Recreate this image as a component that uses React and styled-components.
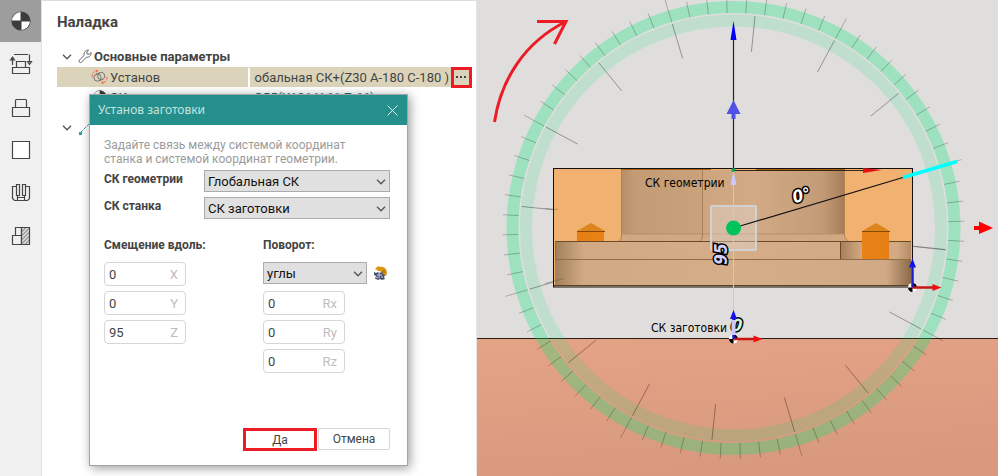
import React, { useState } from "react";
import styled, { createGlobalStyle, css } from "styled-components";

const color = {
  text: "#444444",
  muted: "#9b9b9b",
  border: "#d6d6d6",
  row: "#dbd4bb",
  teal: "#248f8b",
  red: "#ed1c24",
  side: "#f0f0f0"
};

const GlobalStyle = createGlobalStyle`
  * {
    box-sizing: border-box;
  }
  body {
    margin: 0;
    background: #ffffff;
    color: ${color.text};
    font-family: Roboto, "Liberation Sans", sans-serif;
    font-size: 13px;
  }
  button, input, select {
    font: inherit;
    color: inherit;
    margin: 0;
  }
`;

const Layout = styled.main`
  display: grid;
  grid-template-columns: 42px 435px minmax(0, 1fr);
  min-height: 100vh;
`;
const Sidebar = styled.nav`
  background: ${color.side};
  border-right: 1px solid #e2e2e2;
`;
const SideButton = styled.button`
  display: flex;
  align-items: center;
  justify-content: center;
  width: 100%;
  height: 42px;
  margin-bottom: 1px;
  padding: 0;
  border: 0;
  background: ${({ $active }) => ($active ? "#9d9d9d" : "transparent")};
`;
const Panel = styled.section`
  position: relative;
  border-top: 1px solid #dcdcdc;
  border-right: 1px solid #e6e6e6;
  padding: 11px 4px 0 15px;
`;
const Title = styled.h1`
  margin: 0 0 14px;
  font-size: 15px;
  line-height: 20px;
  font-weight: 700;
`;
const Tree = styled.div`
  display: flex;
  flex-direction: column;
`;
const Row = styled.div`
  display: flex;
  align-items: center;
  height: 20px;
  background: ${({ $selected }) => ($selected ? color.row : "transparent")};
`;
const Group = styled.div`
  display: flex;
  align-items: center;
  gap: 2px;
  height: 21px;
  padding-left: 5px;
  font-weight: 700;

  svg:first-child {
    margin-right: 4px;
  }
  & + ${Row} ~ & {
    margin-top: 10px;
  }
`;
const Name = styled.div`
  display: flex;
  align-items: center;
  gap: 2px;
  width: 191px;
  padding-left: 34px;
`;
const NameIcon = styled.span`
  display: flex;
  justify-content: center;
  width: 17px;
`;
const Value = styled.div`
  display: flex;
  flex: 1;
  align-items: center;
  min-width: 0;
  height: 19px;
  padding: 0 2px 0 4px;
  border-left: 2px solid #ffffff;
  color: ${({ $link }) => ($link ? "#1d6a73" : color.text)};
`;
const Clip = styled.div`
  display: flex;
  flex: 1;
  justify-content: ${({ $end }) => ($end ? "flex-end" : "flex-start")};
  min-width: 0;
  overflow: hidden;
  white-space: nowrap;
`;
const More = styled.button`
  display: flex;
  align-items: center;
  justify-content: center;
  width: 21px;
  height: 21px;
  padding: 0;
  border: 3px solid ${color.red};
  background: ${color.row};
`;

const Dialog = styled.form`
  position: absolute;
  left: 47px;
  top: 93px;
  width: 319px;
  border: 1px solid #a3a5a5;
  background: #ffffff;
  box-shadow: 2px 2px 10px rgba(0, 0, 0, 0.4);
`;
const DialogHead = styled.header`
  display: flex;
  align-items: center;
  justify-content: space-between;
  height: 30px;
  padding: 0 7px 0 8px;
  background: ${color.teal};
  color: #c6e3e1;
  font: 12px/30px "Noto Sans", sans-serif;
`;
const Close = styled.button`
  display: flex;
  padding: 2px;
  border: 0;
  background: none;
`;
const DialogBody = styled.div`
  padding: 13px 17px 14px 14px;
`;
const Hint = styled.p`
  margin: 0 0 4px;
  color: ${color.muted};
  font-size: 12px;
  line-height: 14px;
  white-space: nowrap;
`;
const Field = styled.div`
  display: grid;
  grid-template-columns: 100px 1fr;
  margin-bottom: 5px;
`;
const Label = styled.label`
  font-size: 12px;
  font-weight: 700;
  line-height: 18px;
`;
const SelectBox = styled.div`
  position: relative;
  width: ${({ $width }) => $width || "100%"};

  svg {
    position: absolute;
    right: 4px;
    top: 9px;
    pointer-events: none;
  }
`;
const Select = styled.select`
  appearance: none;
  display: block;
  width: 100%;
  height: 22px;
  padding: 0 3px;
  border: 1px solid #acacac;
  border-radius: 0;
  background: #e0e0e0;
  color: #111111;
`;
const Columns = styled.div`
  display: grid;
  grid-template-columns: 159px 1fr;
  margin-top: 17px;
`;
const Column = styled.fieldset`
  display: flex;
  flex-direction: column;
  gap: 5px;
  min-width: 0;
  margin: 0;
  padding: 0;
  border: 0;
`;
const Legend = styled.legend`
  padding: 0;
  margin-bottom: 8px;
  font-size: 12px;
  font-weight: 700;
  line-height: 18px;
`;
const AngleRow = styled.div`
  display: flex;
  align-items: center;
  gap: 6px;
  height: 24px;
  padding-bottom: 2px;
`;
const NumberBox = styled.label`
  display: flex;
  align-items: center;
  width: 82px;
  height: 24px;
  padding: 0 7px 0 4px;
  border: 1px solid ${color.border};
  border-radius: 4px;
  color: #bdbdbd;
`;
const NumberInput = styled.input`
  flex: 1;
  min-width: 0;
  padding: 0;
  border: 0;
  outline: 0;
  background: none;
  color: ${color.text};
`;
const IconButton = styled.button`
  display: flex;
  padding: 0;
  border: 0;
  background: none;
`;
const Footer = styled.footer`
  display: flex;
  justify-content: flex-end;
  gap: 1px;
  margin-top: 55px;
`;
const Button = styled.button`
  width: ${({ $primary }) => ($primary ? "74px" : "72px")};
  height: ${({ $primary }) => ($primary ? "23px" : "22px")};
  padding: 0;
  background: #ffffff;
  font-size: 12px;
  ${({ $primary }) =>
    $primary
      ? css`
          border: 3px solid ${color.red};
        `
      : css`
          border: 1px solid ${color.border};
          border-radius: 2px;
        `}
`;
const Viewport = styled.section`
  background: #dfdedd;
  overflow: hidden;

  svg {
    display: block;
    width: 100%;
    height: 100%;
  }
`;
const SceneLabel = styled.text`
  font: 12px "DejaVu Sans Condensed", "DejaVu Sans", sans-serif;
  fill: #000000;
`;
const Dimension = styled.text`
  font: italic 700 17px "DejaVu Sans Condensed", "DejaVu Sans", sans-serif;
  text-anchor: middle;
  paint-order: stroke;
  stroke: #000000;
  stroke-width: 3px;
`;

const Chevron = () => (
  <svg width="10" height="6" viewBox="0 0 10 6" fill="none" stroke="#555555" strokeWidth="1.3">
    <path d="M1 .8 5 4.8 9 .8" />
  </svg>
);

const WrenchIcon = () => (
  <svg width="14" height="15" viewBox="0 0 14 15" fill="none" stroke="#666666">
    <path d="M1.2 11.2 6.3 6.2C5.6 3.4 7.4 1 10.6 1L8.8 3l.3 2 2.1.3 1.9-1.8c.3 3-1.8 5.3-4.8 4.7L3.4 13.3c-1.4 1.1-3.2-.6-2.2-2.1z" />
  </svg>
);

const SetupIcon = () => (
  <svg width="17" height="16" viewBox="0 0 17 16" fill="none" stroke="#777777">
    <circle cx="6.5" cy="8.6" r="3.6" />
    <circle cx="10.2" cy="7" r="3.6" />
    <path d="M5 5.300 8.800 3.700M8 11.900l3.700-1.600" />
    <path d="M1.2 8.500C.7 5.700 1.800 3.400 4.400 2.200M15.800 7.800c.4 2.700-.9 4.900-3.400 5.900" stroke="#f26b4a" strokeDasharray="3 1" />
    <path d="M4.500.5 7.500 1.400 5 3.800zM12.500 15.400 9.600 13.800l2.700-1.700z" fill="#f26b4a" stroke="none" />
  </svg>
);

const DatumIcon = ({ size = 20 }) => (
  <svg width={size} height={size} viewBox="0 0 20 20">
    <circle cx="10" cy="10" r="9" fill="#ffffff" stroke="#3c3c3c" strokeWidth="1.2" />
    <path d="M10 1a9 9 0 0 0-9 9h9zM10 19a9 9 0 0 0 9-9h-9z" fill="#ffffff" />
    <path d="M10 1a9 9 0 0 1 9 9h-9zM10 19a9 9 0 0 1-9-9h9z" fill="#3c3c3c" />
    <path d="M10 1v18M1 10h18" stroke="#3c3c3c" />
  </svg>
);

const SideIcon = ({ children }) => (
  <svg width="24" height="22" viewBox="0 0 24 22" fill="none" stroke="#454545" strokeWidth="1.2">
    {children}
  </svg>
);

const sideItems = [
  { title: "Наладка", icon: <DatumIcon /> },
  {
    title: "Станок",
    icon: (
      <SideIcon>
        <path d="M5 1.5h14M3.5 14.500h17v6h-17zM7.500 14.500v-6h9v6" />
        <path d="M3.500 12V4M1.500 7l2-3 2 3zM20.500 1.500v8M18.500 8.500l2 3 2-3z" />
      </SideIcon>
    )
  },
  {
    title: "Деталь",
    icon: (
      <SideIcon>
        <path d="M3.500 11.500h17v9h-17zM6.500 11.500v-7q0-1 1-1h9q1 0 1 1v7" />
      </SideIcon>
    )
  },
  {
    title: "Заготовка",
    icon: (
      <SideIcon>
        <path d="M3.500 2.500h17v17h-17z" fill="#ffffff" />
      </SideIcon>
    )
  },
  {
    title: "Оснастка",
    icon: (
      <SideIcon>
        <path d="M7.500 2.500h3v11h-3zM13.500 2.500h3v11h-3zM7.500 4.500h-4v12l2 2h3v-5M16.500 4.500h4v12l-2 2h-3v-5M8.500 15.500h7M8.500 18.500h7" />
      </SideIcon>
    )
  },
  {
    title: "Остаток",
    icon: (
      <SideIcon>
        <path d="M3.500 10.500h9v9h-9zM6.500 10.500v-8h6v8" />
        <path d="M12.500 2.500h8v17h-8z" fill="#d6d6d6" />
        <path d="m12.500 7 4.500-4.500M12.500 11l8-8M12.500 15l8-8M12.500 19l8-8M16 19.500l4.500-4.500" strokeWidth=".7" />
      </SideIcon>
    )
  }
];

const PickIcon = () => (
  <svg width="15" height="15" viewBox="0 0 15 15">
    <path d="M2 3 5 0l1 1c5-1 8 2 8 6l-1 3-4-1c1-2-1-4-4-4L4 4z" fill="#dc960c" />
    <path d="M9 4h3v3h-3z" fill="#b57718" />
    <path d="m1 6 2 1 2-1 1 1 3-1 1 2 2 1-1 2 1 2-3 1-2-1-2 1-2-1H2l1-3-2-1z" fill="#4c5372" />
    <path d="M4 9h5M6 7v5M3 11l2 1M8 11h2" stroke="#c4c9da" fill="none" />
  </svg>
);

const CX = 733.5;
const CY = 228;
const polar = (deg, r) => {
  const a = (deg * Math.PI) / 180;
  return [CX + r * Math.sin(a), CY - r * Math.cos(a)];
};
const ray = (deg, r1, r2) => `M${polar(deg, r1).join(" ")}L${polar(deg, r2).join(" ")}`;

// the outer scale has a mark every 5 degrees, every ninth of them is long
const outerTicks = Array.from({ length: 72 }, (_, i) =>
  ray(i * 5 + 3.3, 215, (i + 4) % 9 === 0 ? 238 : 231)
).join("");
const innerTicks = Array.from({ length: 16 }, (_, i) => ray(i * 22.5 + 5.8, 177, 213)).join("");

const Part = () => (
  <g>
    <rect x="553.5" y="168.5" width="359" height="118" fill="#f0b171" />
    <rect x="621" y="170" width="223" height="72" fill="url(#pocket)" />
    <path d="M621 234h223v2q1 4 4 6H618q3-2 3-6z" fill="#d0a883" />
    <path d="M621 234h223" stroke="#b58d69" />
    <path d="M621.5 170v66q0 4-3 5M844.5 170v66q1 4 4 5" fill="none" stroke="#b08354" />
    <path d="M702.5 170v66q0 3-2 5" fill="none" stroke="#a6805a" />
    <rect x="555" y="241" width="356" height="45" fill="url(#base)" />
    <rect x="840" y="241" width="71" height="18" fill="url(#step)" />
    <path d="M555 241.5h356M840.5 241v18" stroke="#6b4a28" fill="none" />
    <path d="M555 259.5h356M555.5 241v18" stroke="#926c46" />
    <path d="M554 285.5h358" stroke="#5a4129" />
    <path d="M621 169.5h90M756 169.5h89" stroke="#a76114" />
    <path d="M577 231h27v10h-27zM862 231h27v28h-27z" fill="url(#hole)" />
    <path d="m577 231 14-8 14 8zM862 231l14-8 14 8z" fill="#dc861d" />
    <path d="M577 231.5h28M862 231.5h28" stroke="#874b0b" />
    <path d="M545 208.5 558 209.5M545 283.5 564 278.5M914 246.5 946 250" stroke="#555555" opacity=".4" />
    <rect x="553.5" y="168.5" width="359" height="118.5" fill="none" stroke="#111111" />
  </g>
);

const Datum = ({ x, y }) => (
  <g transform={`translate(${x} ${y})`}>
    <circle r="4.5" fill="#ffffff" />
    <path d="M0 0v-4.5a4.5 4.5 0 0 1 4.5 4.5zM0 0v4.5a4.5 4.5 0 0 1-4.5-4.5z" fill="#000000" />
    <path d="M0 0h21" stroke="#c81616" strokeWidth="2.5" />
    <path d="m20-3.500 9 3.500-9 3.500z" fill="#ee1111" />
    <path d="M0 0v-20" stroke="#1c1ccd" strokeWidth="2.5" />
    <path d="m-3.500-20 3.500-9 3.500 9z" fill="#1212ee" />
  </g>
);

const Scene = () => (
  <Viewport aria-label="3D вид">
    <svg viewBox="477 0 521 476" preserveAspectRatio="xMidYMid slice">
      <defs>
        <linearGradient id="floor" x1="0" y1="0" x2=".25" y2="1">
          <stop offset="0" stopColor="#e5a386" />
          <stop offset="1" stopColor="#d8997e" />
        </linearGradient>
        <linearGradient id="pocket">
          <stop offset="0" stopColor="#b58e69" />
          <stop offset=".06" stopColor="#c39b74" />
          <stop offset=".35" stopColor="#c9a17b" />
          <stop offset=".37" stopColor="#cda57f" />
          <stop offset=".6" stopColor="#d2ab86" />
          <stop offset=".9" stopColor="#c39c77" />
          <stop offset="1" stopColor="#a87e59" />
        </linearGradient>
        <linearGradient id="base">
          <stop offset="0" stopColor="#a18058" />
          <stop offset=".08" stopColor="#d1aa85" />
          <stop offset=".5" stopColor="#d5ad88" />
          <stop offset=".93" stopColor="#d1aa85" />
          <stop offset="1" stopColor="#8c6a49" />
        </linearGradient>
        <linearGradient id="step">
          <stop offset="0" stopColor="#a67f59" />
          <stop offset=".3" stopColor="#d0a780" />
          <stop offset=".8" stopColor="#d2aa84" />
          <stop offset="1" stopColor="#b68c65" />
        </linearGradient>
        <linearGradient id="hole">
          <stop offset="0" stopColor="#e57f14" />
          <stop offset=".5" stopColor="#ff9120" />
          <stop offset="1" stopColor="#e57f14" />
        </linearGradient>
      </defs>

      <rect x="477" y="339" width="521" height="137" fill="url(#floor)" />
      <path d="M477 338.5h521" stroke="#2b1c12" />

      <g fill="none">
        <circle cx={CX} cy={CY} r="221" stroke="rgba(0, 236, 117, 0.29)" strokeWidth="12" />
        <circle cx={CX} cy={CY} r="207.5" stroke="rgba(0, 230, 115, 0.14)" strokeWidth="12" />
        <path d={outerTicks} stroke="#000000" opacity=".24" />
        <path d={innerTicks} stroke="#000000" opacity=".34" />
      </g>

      <Part />

      <path d="M733.5 40v130" stroke="#222222" strokeWidth="1.2" />
      <path d="M733.5 170v168" stroke="#c6c5f2" />
      <path d="m733.5 21 3 19h-6z" fill="#0000f5" />
      <path d="m733.5 100 7 14h-5v5h-4v-5h-5z" fill="#5150e6" />
      <path d="m733.5 171 3 14h-6z" fill="#cbc9fb" />
      <circle cx="733.5" cy="170" r="2" fill="#0c9f5c" />
      <path d="M735 170.5h130" stroke="#3a2515" />
      <path d="m863 168 19 2-19 3z" fill="#e31313" />

      <rect x="711" y="206" width="45" height="44" rx="1" fill="rgba(225, 220, 215, 0.4)" stroke="#d1d1d1" strokeWidth="2" />
      <path d="M733.5 206v44" stroke="#c6c5f2" />
      <path d="M733.5 228 903 177.5" stroke="#111111" strokeWidth="1.2" />
      <path d="m903 177.5 54-16" stroke="#00ffff" strokeWidth="3.5" />
      <circle cx="733.5" cy="228" r="7.5" fill="#00c35c" />

      <SceneLabel x="645" y="187">СК геометрии</SceneLabel>
      <SceneLabel x="651" y="332">СК заготовки</SceneLabel>
      <Dimension transform="translate(803 201) rotate(-15)" fill="#ffffff">0°</Dimension>
      <Dimension transform="translate(727 254) rotate(-90)" fill="#d3d1ff">95</Dimension>
      <Dimension transform="translate(736 331) rotate(8)" fill="#d0f6d0">0</Dimension>

      <Datum x={733.5} y={339} />
      <path d="M733.5 320v15" stroke="#cbc9fb" strokeWidth="4" />
      <Datum x={912.5} y={287.5} />

      <path d="M974 226h5v-4.500l14 6.500-14 6v-4h-5z" fill="#ff0000" />
      <path d="M494.5 122C501 79 525 42 566 21.5M537 21.5h29L554.5 44" fill="none" stroke={color.red} strokeWidth="3" />
    </svg>
  </Viewport>
);

const NumberField = ({ label, value }) => {
  const [current, setCurrent] = useState(value);
  return (
    <NumberBox>
      <NumberInput value={current} onChange={e => setCurrent(e.target.value)} />
      {label}
    </NumberBox>
  );
};

const DropDown = ({ id, width, value, label }) => (
  <SelectBox $width={width}>
    <Select id={id} defaultValue={value} aria-label={label}>
      <option>{value}</option>
    </Select>
    <Chevron />
  </SelectBox>
);

const SetupDialog = () => (
  <Dialog role="dialog" aria-label="Установ заготовки" onSubmit={e => e.preventDefault()}>
    <DialogHead>
      Установ заготовки
      <Close type="button" aria-label="Закрыть">
        <svg width="11" height="11" viewBox="0 0 11 11" stroke="#e4f2f1">
          <path d="m.5.5 10 10M10.5.5l-10 10" />
        </svg>
      </Close>
    </DialogHead>
    <DialogBody>
      <Hint>
        Задайте связь между системой координат
        <br />
        станка и системой координат геометрии.
      </Hint>
      <Field>
        <Label htmlFor="geometry">СК геометрии</Label>
        <DropDown id="geometry" value="Глобальная СК" />
      </Field>
      <Field>
        <Label htmlFor="machine">СК станка</Label>
        <DropDown id="machine" value="СК заготовки" />
      </Field>
      <Columns>
        <Column>
          <Legend>Смещение вдоль:</Legend>
          <NumberField label="X" value="0" />
          <NumberField label="Y" value="0" />
          <NumberField label="Z" value="95" />
        </Column>
        <Column>
          <Legend>Поворот:</Legend>
          <AngleRow>
            <DropDown width="104px" value="углы" label="Поворот" />
            <IconButton type="button" aria-label="Выбрать">
              <PickIcon />
            </IconButton>
          </AngleRow>
          <NumberField label="Rx" value="0" />
          <NumberField label="Ry" value="0" />
          <NumberField label="Rz" value="0" />
        </Column>
      </Columns>
      <Footer>
        <Button type="submit" $primary>
          Да
        </Button>
        <Button type="button">Отмена</Button>
      </Footer>
    </DialogBody>
  </Dialog>
);

export default () => {
  const [active, setActive] = useState(0);
  return (
    <>
      <GlobalStyle />
      <Layout>
        <Sidebar>
          {sideItems.map(({ title, icon }, i) => (
            <SideButton key={title} aria-label={title} $active={i === active} onClick={() => setActive(i)}>
              {icon}
            </SideButton>
          ))}
        </Sidebar>
        <Panel>
          <Title>Наладка</Title>
          <Tree>
            <Group>
              <Chevron />
              <WrenchIcon />
              Основные параметры
            </Group>
            <Row $selected>
              <Name>
                <NameIcon>
                  <SetupIcon />
                </NameIcon>
                Установ
              </Name>
              <Value>
                <Clip $end>Глобальная СК+(Z30 A-180 C-180 )</Clip>
              </Value>
              <More aria-label="Изменить">
                <svg width="11" height="3" viewBox="0 0 11 3" fill="#444444">
                  <path d="M0 0h2v2H0zM4 0h2v2H4zM8 0h2v2H8z" />
                </svg>
              </More>
            </Row>
            <Row>
              <Name>
                <NameIcon>
                  <DatumIcon size={14} />
                </NameIcon>
                СК
              </Name>
              <Value $link>
                <Clip>G55(X101 Y-61 Z-66)</Clip>
              </Value>
            </Row>
            <Group>
              <Chevron />
              <svg width="14" height="14" viewBox="0 0 14 14" fill="none" stroke="#2aa3a3">
                <path d="M2 12 13 1" strokeDasharray="4 1" />
                <path d="M1 11h3v3H1z" fill="#2aa3a3" stroke="none" />
              </svg>
            </Group>
          </Tree>
          <SetupDialog />
        </Panel>
        <Scene />
      </Layout>
    </>
  );
};
